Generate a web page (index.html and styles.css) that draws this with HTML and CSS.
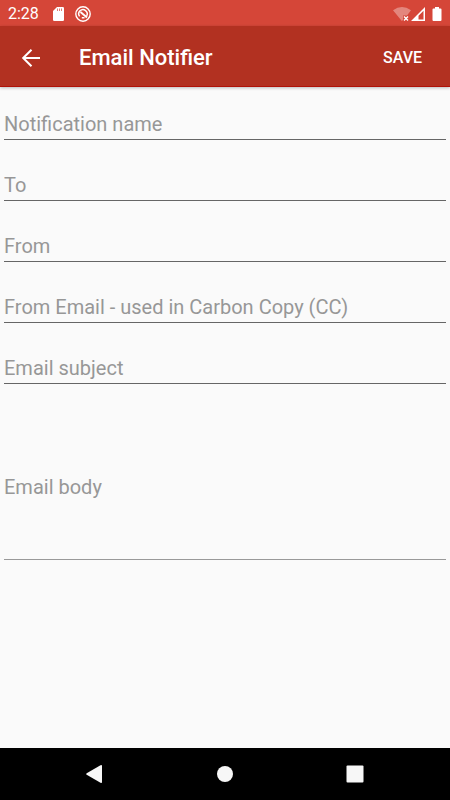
FILE: index.html
```html
<!DOCTYPE html>
<html lang="en">
<head>
  <meta charset="utf-8">
  <meta name="viewport" content="width=device-width, initial-scale=1">
  <title>Email Notifier</title>
  <link rel="stylesheet" href="styles.css">
</head>
<body>
  <div class="status-bar">
    <span class="clock">2:28</span>
    <svg class="sd-icon" width="11" height="14" viewBox="0 0 11 14" aria-hidden="true">
      <path fill="#fff" d="M4 0h5.700Q11 0 11 1.300V12.700Q11 14 9.700 14H1.300Q0 14 0 12.700V4z"/>
      <path stroke="#d54638" stroke-opacity=".7" stroke-width="1" d="M4.500 1.500v2.500M6.500 1.500v2.500M8.500 1.500v2.500"/>
    </svg>
    <svg class="ring-icon" width="16" height="16" viewBox="0 0 16 16" fill="none" stroke="#fff" aria-hidden="true">
      <circle cx="8" cy="8" r="7.200" stroke-width="1.400"/>
      <path stroke-width="1.500" d="M4.600 10.400A4.200 4.200 0 1 1 11.600 10M6.800 11.800h2.700"/>
      <path stroke-width="1.800" d="M5.500 6L12 11.500"/>
    </svg>
    <svg class="signal-icons" width="50" height="16" viewBox="0 0 50 16" aria-hidden="true">
      <path fill="#fff" fill-opacity=".35" d="M0 4.300Q9 -2.300 18 4.300L14 9.500H10V14L8.800 15z"/>
      <path stroke="#fff" stroke-width="1.400" d="M11 10.500l4 4M15 10.500l-4 4"/>
      <path fill="#fff" fill-rule="evenodd" d="M18 15L32 1V15zM25.500 13.500H30.500V4.800L25.500 9.800z"/>
      <path fill="#fff" d="M42 1h4v1.500h1.500q1 0 1 1V14q0 1-1 1H40.500q-1 0-1-1V3.500q0-1 1-1H42z"/>
    </svg>
  </div>
  <header class="app-bar">
    <button class="back" type="button" aria-label="Back">
      <svg width="20" height="20" viewBox="0 0 20 20" fill="none" stroke="#fff" stroke-width="2" aria-hidden="true">
        <path d="M19 10H2.500M10.500 1.700L2.200 10L10.500 18.300"/>
      </svg>
    </button>
    <h1 class="title">Email Notifier</h1>
    <button class="save" type="submit" form="notifier">SAVE</button>
  </header>
  <main class="content">
    <form class="form" id="notifier">
      <input class="field" type="text" placeholder="Notification name" aria-label="Notification name">
      <input class="field" type="text" placeholder="To" aria-label="To">
      <input class="field" type="text" placeholder="From" aria-label="From">
      <input class="field" type="text" placeholder="From Email - used in Carbon Copy (CC)" aria-label="From Email - used in Carbon Copy (CC)">
      <input class="field" type="text" placeholder="Email subject" aria-label="Email subject">
      <textarea class="field field-body" placeholder="Email body" aria-label="Email body"></textarea>
    </form>
  </main>
  <nav class="nav-bar" aria-label="System">
    <button class="nav-button" type="button" aria-label="Back">
      <svg width="18" height="20" viewBox="0 0 18 20" aria-hidden="true"><path fill="#f7f7f7" d="M.700 9.200L14.500 1.200Q16 .500 16 2V18Q16 19.500 14.500 18.800L.700 10.800Q-.300 10 .700 9.200z"/></svg>
    </button>
    <button class="nav-button" type="button" aria-label="Home">
      <svg width="18" height="18" viewBox="0 0 18 18" aria-hidden="true"><circle cx="9" cy="9" r="8" fill="#f7f7f7"/></svg>
    </button>
    <button class="nav-button" type="button" aria-label="Recent apps">
      <svg width="18" height="18" viewBox="0 0 18 18" aria-hidden="true"><rect x=".500" y=".500" width="17" height="17" rx="1" fill="#f7f7f7"/></svg>
    </button>
  </nav>
</body>
</html>
```
FILE: styles.css
```css
* {
  box-sizing: border-box;
}

body {
  margin: 0;
  min-height: 100vh;
  display: flex;
  flex-direction: column;
  background: #fafafa;
  font-family: Roboto, "Liberation Sans", sans-serif;
}

button {
  border: 0;
  padding: 0;
  background: none;
  color: inherit;
  font: inherit;
}

svg {
  display: block;
}

.status-bar {
  display: flex;
  align-items: center;
  height: 26px;
  padding: 1px 7px 0 8px;
  background: #d54638;
  color: #fff;
}

.clock {
  font-size: 16px;
  line-height: 24px;
}

.sd-icon {
  margin-left: 14px;
}

.ring-icon {
  margin-left: 11px;
}

.signal-icons {
  margin-left: auto;
}

.app-bar {
  display: flex;
  align-items: center;
  height: 61px;
  padding: 3px 20px 0 21px;
  background: #b23121;
  border-bottom: 1px solid #b01208;
  box-shadow: 0 1px 3px rgba(0, 0, 0, 0.25);
  color: #fff;
}

.back {
  width: 58px;
  height: 48px;
  display: flex;
  align-items: center;
}

.title {
  margin: 0;
  flex: 1;
  font-size: 22px;
  line-height: 32px;
  font-weight: 500;
}

.save {
  padding: 8px;
  font-size: 16px;
  line-height: 24px;
  font-weight: 500;
}

.content {
  flex: 1;
}

.form {
  display: flex;
  flex-direction: column;
  gap: 21px;
  padding: 13px 4px;
}

.field {
  display: block;
  width: 100%;
  margin: 0;
  padding: 12px 0 3px;
  border: 0;
  border-bottom: 1px solid #666;
  border-radius: 0;
  background: transparent;
  color: #222;
  font-family: inherit;
  font-size: 20px;
  line-height: 24px;
  height: 40px;
  outline: 0;
}

.field::placeholder {
  color: #979797;
  opacity: 1;
}

.field-body {
  height: 155px;
  padding-top: 70px;
  border-color: #999;
  resize: none;
}

.nav-bar {
  display: flex;
  justify-content: center;
  height: 52px;
  background: #000;
}

.nav-button {
  width: 130px;
  display: flex;
  align-items: center;
  justify-content: center;
}
```
